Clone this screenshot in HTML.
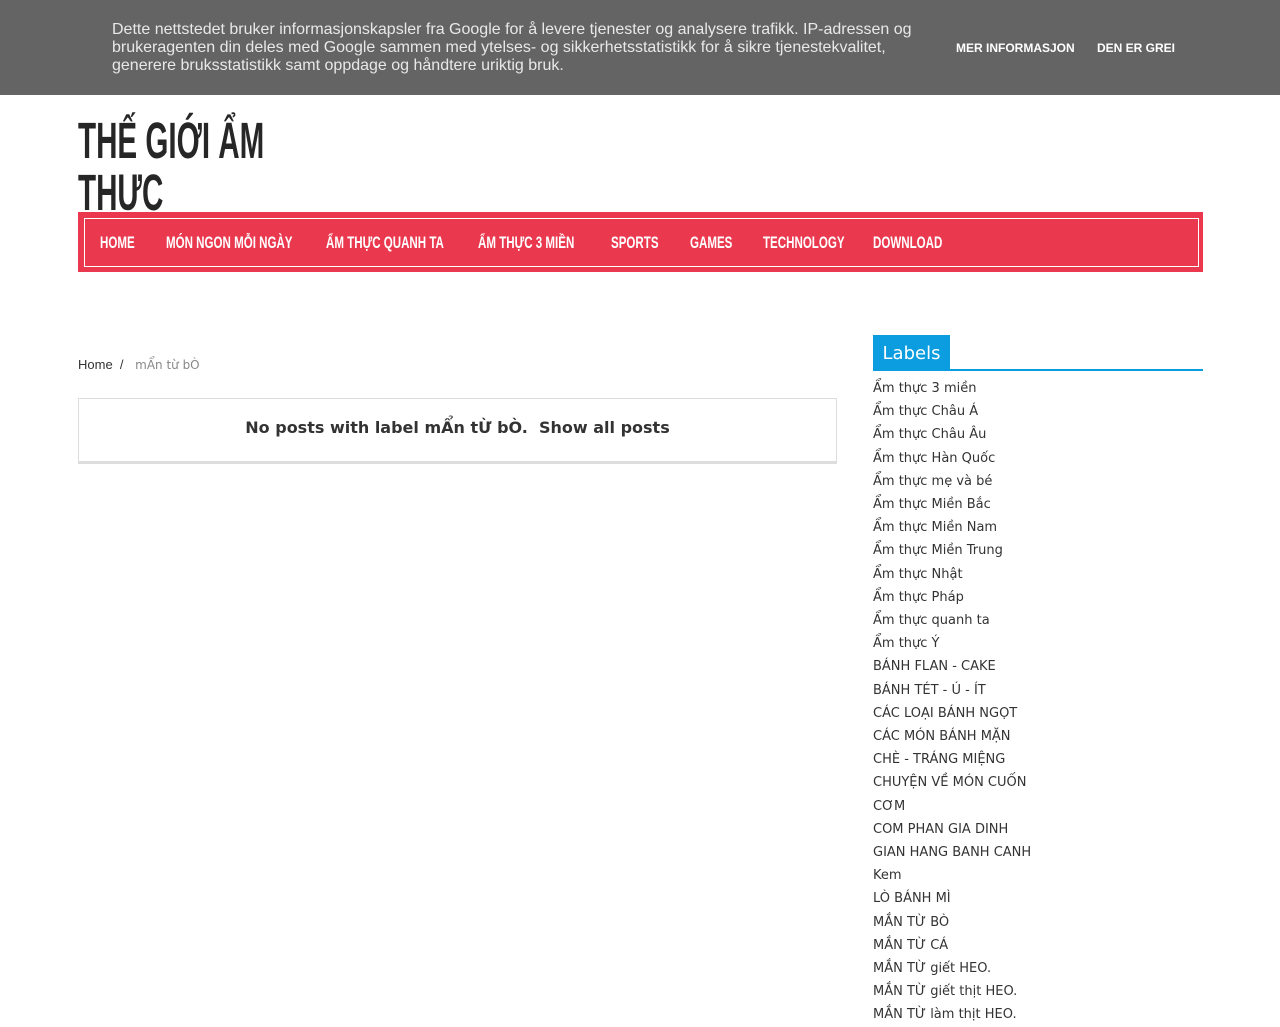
<!DOCTYPE html>
<html><head><meta charset="utf-8"><style>
body{margin:0;background:#fff;font-family:"Liberation Sans",sans-serif;}
.cookie{position:absolute;left:0;top:0;width:1280px;height:95px;background:#646464;color:#e8e8e8;}
.cookie .t{position:absolute;left:112px;top:21px;width:820px;font-size:16px;line-height:18px;}
.cookie .b{position:absolute;top:41px;font-size:12px;font-weight:bold;color:#fff;}
.title{position:absolute;left:78px;top:115px;font-family:"Liberation Sans",sans-serif;font-weight:bold;font-size:51px;line-height:52px;color:#262626;transform:scaleX(.58);transform-origin:left;white-space:nowrap;}
.nav{position:absolute;left:78px;top:212px;width:1125px;height:60px;background:#ea384f;}
.nav .in{position:absolute;left:6px;top:6px;right:4px;bottom:5px;border:1px solid #fff;}
.nav span{position:absolute;top:21px;color:#fff;font-family:"Liberation Sans",sans-serif;font-weight:bold;font-size:17px;white-space:nowrap;transform:scaleX(.68);transform-origin:left;}
.crumb{position:absolute;left:78px;top:357px;font-size:13px;color:#333;}
.crumb i{font-style:normal;color:#888;margin-left:8px;font-family:"DejaVu Sans",sans-serif;font-size:12px}
.box{position:absolute;left:78px;top:398px;width:757px;height:62px;border:1px solid #ddd;border-bottom:3px solid #ddd;}
.box div{position:absolute;top:19px;left:0;right:0;text-align:center;font-family:"DejaVu Sans",sans-serif;font-weight:bold;font-size:16px;color:#333;}
.lab{position:absolute;left:873px;top:335px;width:77px;height:35px;background:#0b9de0;color:#fff;font-family:"DejaVu Sans",sans-serif;font-size:18px;line-height:37px;text-align:center;}
.line{position:absolute;left:873px;top:369px;width:330px;height:2px;background:#0b9de0;}
.list{position:absolute;left:873px;top:377px;font-family:"DejaVu Sans",sans-serif;font-size:13px;line-height:23.2px;color:#333;}
</style></head><body>
<div class="cookie"><div class="t">Dette nettstedet bruker informasjonskapsler fra Google for å levere tjenester og analysere trafikk. IP-adressen og brukeragenten din deles med Google sammen med ytelses- og sikkerhetsstatistikk for å sikre tjenestekvalitet, generere bruksstatistikk samt oppdage og håndtere uriktig bruk.</div>
<div class="b" style="left:956px">MER INFORMASJON</div><div class="b" style="left:1097px">DEN ER GREI</div></div>
<div class="title">THẾ GIỚI ẨM<br>THỰC</div>
<div class="nav"><div class="in"></div>
<span style="left:22px">HOME</span><span style="left:88px">MÓN NGON MỖI NGÀY</span><span style="left:248px">ẨM THỰC QUANH TA</span><span style="left:400px">ẨM THỰC 3 MIỀN</span><span style="left:533px">SPORTS</span><span style="left:612px">GAMES</span><span style="left:685px">TECHNOLOGY</span><span style="left:795px">DOWNLOAD</span></div>
<div class="crumb">Home &nbsp;/ <i>mẨn từ bÒ</i></div>
<div class="box"><div>No posts with label mẨn tỪ bÒ.&nbsp; Show all posts</div></div>
<div class="lab">Labels</div><div class="line"></div>
<div class="list">Ẩm thực 3 miền<br>Ẩm thực Châu Á<br>Ẩm thực Châu Âu<br>Ẩm thực Hàn Quốc<br>Ẩm thực mẹ và bé<br>Ẩm thực Miền Bắc<br>Ẩm thực Miền Nam<br>Ẩm thực Miền Trung<br>Ẩm thực Nhật<br>Ẩm thực Pháp<br>Ẩm thực quanh ta<br>Ẩm thực Ý<br>BÁNH FLAN - CAKE<br>BÁNH TÉT - Ú - ÍT<br>CÁC LOẠI BÁNH NGỌT<br>CÁC MÓN BÁNH MẶN<br>CHÈ - TRÁNG MIỆNG<br>CHUYỆN VỀ MÓN CUỐN<br>CƠM<br>COM PHAN GIA DINH<br>GIAN HANG BANH CANH<br>Kem<br>LÒ BÁNH MÌ<br>MẮN TỪ BÒ<br>MẮN TỪ CÁ<br>MẮN TỪ giết HEO.<br>MẮN TỪ giết thịt HEO.<br>MẮN TỪ làm thịt HEO.</div>
</body></html>
